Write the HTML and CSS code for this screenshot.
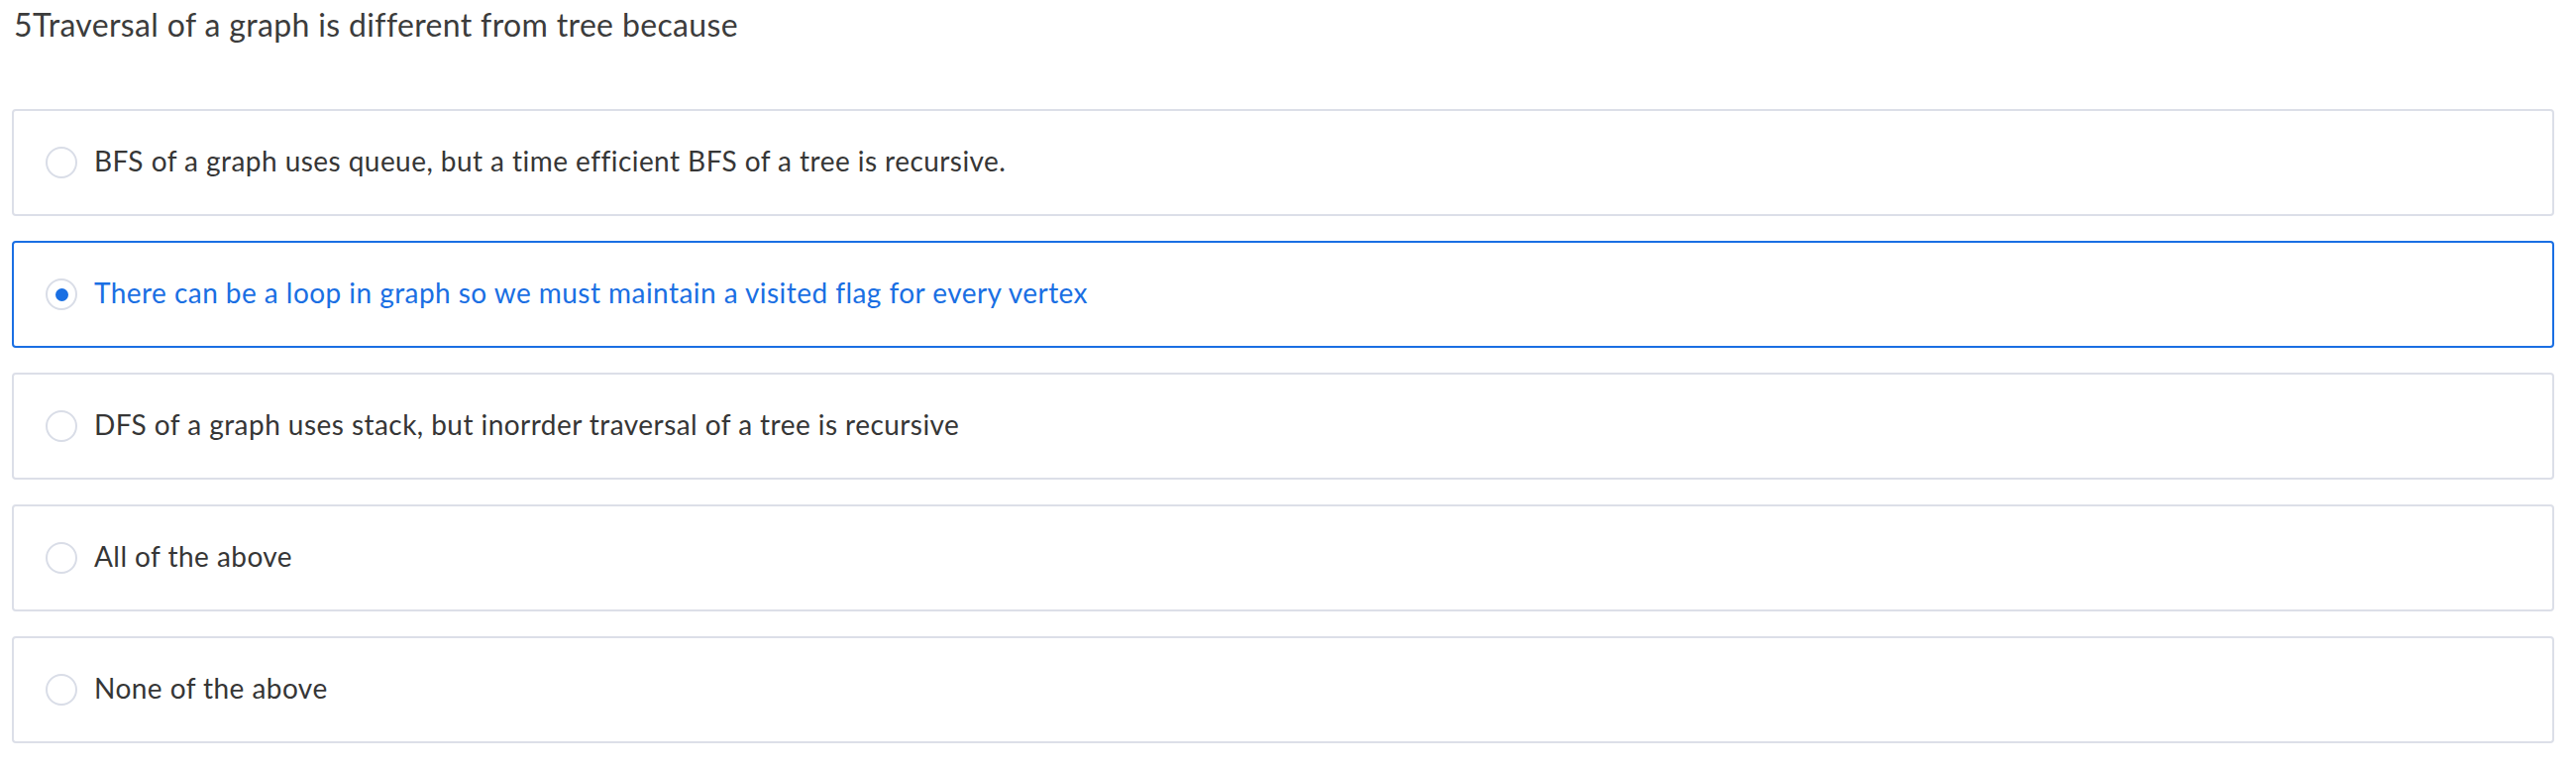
FILE: index.html
```html
<!DOCTYPE html>
<html>
<head>
<meta charset="utf-8">
<link rel="stylesheet" href="styles.css">
</head>
<body>
<div class="quiz">
  <h1 class="question">5Traversal of a graph is different from tree because</h1>
  <div class="options">
    <label class="option">
      <span class="radio"></span>
      <span class="label">BFS of a graph uses queue, but a time efficient BFS of a tree is recursive.</span>
    </label>
    <label class="option selected">
      <span class="radio"></span>
      <span class="label">There can be a loop in graph so we must maintain a visited flag for every vertex</span>
    </label>
    <label class="option">
      <span class="radio"></span>
      <span class="label">DFS of a graph uses stack, but inorrder traversal of a tree is recursive</span>
    </label>
    <label class="option">
      <span class="radio"></span>
      <span class="label">All of the above</span>
    </label>
    <label class="option">
      <span class="radio"></span>
      <span class="label">None of the above</span>
    </label>
  </div>
</div>
</body>
</html>
```
FILE: styles.css
```css
html, body {
  margin: 0;
  padding: 0;
  background: #ffffff;
}

.quiz {
  padding: 0 22px 0 12px;
  font-family: Lato, "Liberation Sans", sans-serif;
  color: #333333;
}

.question {
  margin: 0;
  height: 110px;
  padding-top: 6px;
  box-sizing: border-box;
  font-size: 32px;
  font-weight: 400;
  line-height: 38px;
  letter-spacing: 0.35px;
  color: #3c3c3c;
  padding-left: 2px;
}

.options {
  display: flex;
  flex-direction: column;
  gap: 25px;
}

.option {
  display: flex;
  align-items: center;
  height: 108px;
  box-sizing: border-box;
  border: 2px solid #dcdfe8;
  border-radius: 4px;
  padding-left: 32px;
  gap: 17px;
  font-size: 28px;
  letter-spacing: 0.45px;
  color: #363636;
}

.label {
  padding-bottom: 4px;
}

.option.selected {
  border-color: #1a6fe3;
  color: #1a6fe3;
}

.radio {
  width: 32px;
  height: 32px;
  box-sizing: border-box;
  border: 2px solid #d9dde7;
  border-radius: 50%;
  flex: none;
  display: flex;
  align-items: center;
  justify-content: center;
}

.option.selected .radio::after {
  content: "";
  width: 13px;
  height: 13px;
  border-radius: 50%;
  background: #1a6fe3;
}
```
